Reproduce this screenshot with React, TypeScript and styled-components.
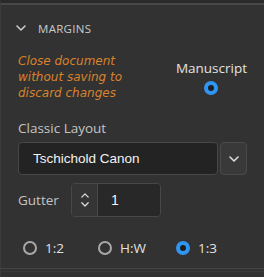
import React, { useState } from 'react'
import styled, { createGlobalStyle } from 'styled-components'

const GlobalStyle = createGlobalStyle`
  body {
    margin: 0;
    background: #323232;
    font-family: "Open Sans", "DejaVu Sans", sans-serif;
  }
`

const Panel = styled.div`
  width: 264px;
  height: 277px;
  box-sizing: border-box;
  background: #323232;
  border-top: 3px solid #2a2a2a;
  border-left: 1px solid #3c3c3c;
  position: relative;
  overflow: hidden;
`

const TopRule = styled.div`
  height: 2px;
  background: #484848;
`

const Header = styled.div`
  display: flex;
  align-items: center;
  gap: 12px;
  height: 46px;
  padding-left: 15px;
  color: #cacaca;
  font-size: 11.5px;
  letter-spacing: 0.3px;
  text-transform: uppercase;
`

const Body = styled.div`
  padding: 0 17px;
  display: flex;
  flex-direction: column;
`

const WarnRow = styled.div`
  display: flex;
  justify-content: space-between;
  align-items: flex-start;
`

const Warning = styled.div`
  display: flex;
  flex-direction: column;
  color: #d9822b;
  font-family: "DejaVu Sans", "Open Sans", sans-serif;
  font-style: italic;
  font-size: 12px;
  line-height: 16px;
  margin-top: 2px;
`

const ManuscriptBox = styled.div`
  display: flex;
  flex-direction: column;
  align-items: center;
  gap: 4px;
  margin-top: 8px;
  color: #e2e2e2;
  font-size: 13.5px;
  line-height: 18px;
`

const Label = styled.div<{ mt?: number }>`
  color: #c4c4c4;
  font-size: 13.5px;
  line-height: 18px;
  margin-top: ${({ mt }) => mt ?? 0}px;
`

const SelectRow = styled.div`
  display: flex;
  gap: 2px;
  margin-top: 5px;
  height: 33px;
`

const SelectBox = styled.div`
  flex: 0 0 200px;
  box-sizing: border-box;
  background: #232323;
  border: 1px solid #474747;
  border-radius: 4px;
  display: flex;
  align-items: center;
  padding-left: 14px;
  color: #f2f2f2;
  font-family: "Liberation Sans", Arial, sans-serif;
  font-size: 13.5px;
`

const IconButton = styled.div`
  flex: 0 0 27px;
  box-sizing: border-box;
  background: #393939;
  border: 1px solid #4a4a4a;
  border-radius: 4px;
  display: flex;
  align-items: center;
  justify-content: center;
  color: #dcdcdc;
`

const GutterRow = styled.div`
  display: flex;
  align-items: center;
  margin-top: 8px;
`

const GutterLabel = styled.div`
  color: #c4c4c4;
  font-size: 13.5px;
  width: 53px;
`

const Stepper = styled.div`
  display: flex;
  height: 34px;
  width: 90px;
  box-sizing: border-box;
  border: 1px solid #474747;
  border-radius: 4px;
  overflow: hidden;
`

const StepButtons = styled.div`
  width: 25px;
  background: #353535;
  border-right: 1px solid #474747;
  display: flex;
  flex-direction: column;
  align-items: center;
  justify-content: center;
  gap: 4px;
  color: #dcdcdc;
`

const StepValue = styled.div`
  flex: 1;
  background: #282828;
  color: #f2f2f2;
  font-family: "Liberation Sans", Arial, sans-serif;
  font-size: 14px;
  display: flex;
  align-items: center;
  padding-left: 13px;
`

const RatioRow = styled.div`
  display: flex;
  align-items: center;
  margin-top: 22px;
  padding-left: 5px;
  line-height: 18px;
`

const RatioOption = styled.label<{ w: number }>`
  display: flex;
  align-items: center;
  gap: 8px;
  width: ${({ w }) => w}px;
  color: #e2e2e2;
  font-size: 13.5px;
  cursor: pointer;
`

const Radio = styled.span<{ on?: boolean }>`
  width: 14px;
  height: 14px;
  box-sizing: border-box;
  border-radius: 50%;
  display: inline-flex;
  border: ${({ on }) => (on ? '4.5px solid #2f96f4' : '2px solid #a8a8a8')};
  background: ${({ on }) => (on ? '#1e1e1e' : 'transparent')};
`

const BottomRule = styled.div`
  position: absolute;
  left: 0;
  right: 0;
  bottom: 5px;
  height: 2px;
  border-top: 1px solid #454545;
  border-bottom: 1px solid #3a3a3a;
`

const Chevron = ({ size = 10 }: { size?: number }) => (
  <svg width={size} height={size * 0.6} viewBox="0 0 10 6" fill="none">
    <path d="M1 1l4 4 4-4" stroke="currentColor" strokeWidth="1.6" strokeLinecap="round" strokeLinejoin="round" />
  </svg>
)

const ChevronUp = () => (
  <svg width="8" height="5" viewBox="0 0 10 6" fill="none">
    <path d="M1 5l4-4 4 4" stroke="currentColor" strokeWidth="1.6" strokeLinecap="round" strokeLinejoin="round" />
  </svg>
)

const warningLines = ['Close document', 'without saving to', 'discard changes']

const ratios = [
  { id: '1:2', w: 75 },
  { id: 'H:W', w: 78 },
  { id: '1:3', w: 60 },
]

export default function App() {
  const [ratio, setRatio] = useState('1:3')
  return (
    <>
      <GlobalStyle />
      <Panel>
        <TopRule />
        <Header>
          <Chevron />
          <span>Margins</span>
        </Header>
        <Body>
          <WarnRow>
            <Warning>
              {warningLines.map((line) => (
                <span key={line}>{line}</span>
              ))}
            </Warning>
            <ManuscriptBox>
              <span>Manuscript</span>
              <Radio on />
            </ManuscriptBox>
          </WarnRow>
          <Label mt={18}>Classic Layout</Label>
          <SelectRow>
            <SelectBox>Tschichold Canon</SelectBox>
            <IconButton>
              <Chevron />
            </IconButton>
          </SelectRow>
          <GutterRow>
            <GutterLabel>Gutter</GutterLabel>
            <Stepper>
              <StepButtons>
                <ChevronUp />
                <Chevron size={8} />
              </StepButtons>
              <StepValue>1</StepValue>
            </Stepper>
          </GutterRow>
          <RatioRow>
            {ratios.map((r) => (
              <RatioOption key={r.id} w={r.w} onClick={() => setRatio(r.id)}>
                <Radio on={ratio === r.id} />
                {r.id}
              </RatioOption>
            ))}
          </RatioRow>
        </Body>
        <BottomRule />
      </Panel>
    </>
  )
}
